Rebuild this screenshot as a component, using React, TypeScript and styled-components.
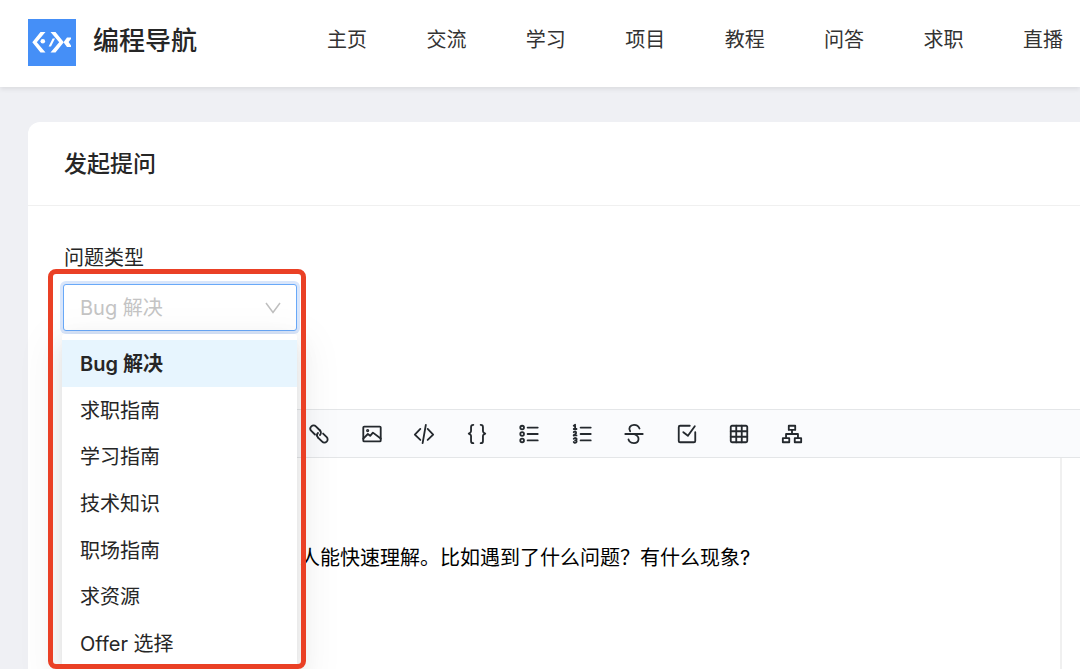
import React from "react";
import styled, { createGlobalStyle } from "styled-components";

const GlobalStyle = createGlobalStyle`
  *, *::before, *::after { box-sizing: border-box; }
  body {
    margin: 0;
    background: #eff0f4;
    color: #262626;
    font-family: Inter, "Noto Sans CJK SC", sans-serif;
    font-size: 20px;
    line-height: 32px;
  }
`;

const Page = styled.div`
  display: flex;
  flex-direction: column;
  min-height: 100vh;
`;

const Header = styled.header`
  position: relative;
  display: flex;
  align-items: center;
  height: 87px;
  padding: 0 17px 2px 28px;
  background: #fff;
  box-shadow: 0 2px 5px rgba(0, 0, 0, 0.09);
`;

const Brand = styled.a`
  display: flex;
  align-items: center;
  gap: 17px;
  flex: 0 0 299px;
  color: inherit;
  font-size: 26px;
  font-weight: 500;
  text-decoration: none;
`;

const LogoMark = styled.svg`
  display: block;
  width: 48px;
  height: 47px;
`;

const BrandName = styled.span`
  padding-bottom: 4px;
`;

const Nav = styled.nav`
  display: flex;
  flex: 1;
  justify-content: space-between;
  padding-bottom: 6px;
`;

const NavLink = styled.a`
  color: #333;
  text-decoration: none;
  white-space: nowrap;
`;

const Main = styled.main`
  display: flex;
  flex: 1;
  padding: 35px 0 0 28px;
`;

const Card = styled.section`
  display: flex;
  flex: 1;
  flex-direction: column;
  min-width: 0;
  background: #fff;
  border-radius: 12px 0 0 0;
`;

const CardHeader = styled.header`
  height: 84px;
  padding: 26px 36px 0;
  border-bottom: 1px solid #f0f0f0;
`;

const CardTitle = styled.h1`
  margin: 0;
  font-size: 23px;
  font-weight: 500;
  line-height: 32px;
`;

const Field = styled.div`
  position: relative;
  width: 269px;
  padding: 35px 0 0 35px;
`;

const FieldLabel = styled.label`
  display: block;
  height: 43px;
  padding: 1px 0 0 1px;
`;

const SelectBox = styled.div`
  position: relative;
  display: flex;
`;

const TypeSelect = styled.select`
  width: 100%;
  height: 47px;
  padding: 0 16px;
  appearance: none;
  background: #fff;
  border: 1px solid #69a9f8;
  border-radius: 3px;
  outline: none;
  box-shadow: 0 0 0 3px #d9e6fb;
  color: #c4c4c4;
  font: inherit;
`;

const Chevron = styled.svg`
  position: absolute;
  top: 16px;
  right: 16px;
  width: 16px;
  height: 16px;
  pointer-events: none;
`;

const Dropdown = styled.ul`
  position: absolute;
  z-index: 1;
  top: 128px;
  left: 34px;
  display: flex;
  flex-direction: column;
  width: 235px;
  height: 334px;
  margin: 0;
  padding: 6px 0 2px;
  list-style: none;
  background: #fff;
  border-radius: 3px;
  box-shadow:
    0 4px 9px -6px rgba(0, 0, 0, 0.12),
    0 9px 24px rgba(0, 0, 0, 0.08),
    0 14px 40px 12px rgba(0, 0, 0, 0.05);
`;

const Option = styled.li<{ $active?: boolean }>`
  display: flex;
  flex: 1;
  align-items: center;
  padding: 2px 18px 0;
  background: ${(p) => (p.$active ? "#e7f5fe" : "transparent")};
  font-weight: ${(p) => (p.$active ? 600 : 400)};
`;

const Highlight = styled.div`
  position: absolute;
  z-index: 2;
  top: 63px;
  left: 20px;
  width: 258px;
  height: 400px;
  border: 5px solid #ea4025;
  border-radius: 8px;
  pointer-events: none;
`;

const Editor = styled.section`
  display: flex;
  flex: 1;
  flex-direction: column;
  margin: 78px 0 0 35px;
`;

const Toolbar = styled.div`
  padding: 0 0 0 245px;
  background: #fafbfd;
  border: solid #e4e6e8;
  border-width: 1px 0;
`;

const ToolGroup = styled.div`
  display: flex;
  align-items: center;
  justify-content: space-between;
  width: 495px;
  height: 47px;
  padding-top: 1px;
`;

const ToolButton = styled.button`
  width: 22px;
  height: 22px;
  padding: 0;
  background: none;
  border: 0;
  color: #24292e;
`;

const ToolIcon = styled.svg`
  display: block;
  width: 22px;
  height: 22px;
  fill: none;
  stroke: currentColor;
  stroke-width: 4;
  stroke-linecap: round;
  stroke-linejoin: round;
`;

const Content = styled.div`
  flex: 1;
  margin-right: 18px;
  padding: 84px 0 0 237px;
  border-right: 2px solid #f0f0f0;
  color: #000;
`;

const Paragraph = styled.p`
  margin: 0;
  white-space: nowrap;
`;

const navItems = ["主页", "交流", "学习", "项目", "教程", "问答", "求职", "直播"];

const options = ["Bug 解决", "求职指南", "学习指南", "技术知识", "职场指南", "求资源", "Offer 选择"];

const tools: { label: string; paths: string[] }[] = [
  {
    label: "链接",
    paths: [
      "M26.24 16.373L17.1 7.233C14.439 4.572 10.065 4.63 7.332 7.364C4.598 10.098 4.539 14.471 7.2 17.133L15.136 25.068",
      "M32.903 23.003L40.838 30.939C43.499 33.6 43.441 37.974 40.707 40.707C37.973 43.441 33.6 43.5 30.939 40.838L21.799 31.698",
      "M26.109 26.142C28.843 23.408 28.902 19.034 26.24 16.373",
      "M21.799 21.798C19.065 24.532 19.007 28.906 21.668 31.567",
    ],
  },
  {
    label: "图片",
    paths: [
      "M5 10C5 8.9 5.9 8 7 8H41C42.1 8 43 8.9 43 10V38C43 39.1 42.1 40 41 40H7C5.9 40 5 39.1 5 38V10Z",
      "M14.5 18A1.5 1.5 0 1 0 14.5 15A1.5 1.5 0 1 0 14.5 18Z",
      "M5 34L15 24L20 28L26 21L43 34",
    ],
  },
  { label: "代码", paths: ["M16 13L4 25.432L16 37", "M32 13L44 25.432L32 37", "M28 4L21 44"] },
  {
    label: "代码块",
    paths: [
      "M16 4C14 4 11 5 11 9V18C11 21 6 23 6 23C6 23 11 25 11 28V39C11 43 14 44 16 44",
      "M32 4C34 4 37 5 37 9V18C37 21 42 23 42 23C42 23 37 25 37 28V39C37 43 34 44 32 44",
    ],
  },
  {
    label: "无序列表",
    paths: [
      "M9 14A4 4 0 1 0 9 6A4 4 0 1 0 9 14Z",
      "M9 28A4 4 0 1 0 9 20A4 4 0 1 0 9 28Z",
      "M9 42A4 4 0 1 0 9 34A4 4 0 1 0 9 42Z",
      "M21 24H43M21 38H43M21 10H43",
    ],
  },
  {
    label: "有序列表",
    paths: [
      "M9 4V13M12 13H6M12 27H6M9 4L6 6M11 38H9",
      "M6 20C6 20 9 17 11 20C13 23 6 27 6 27",
      "M6 34.5C6 34.5 8 31.5 11 33.5C14 35.5 11 38 11 38C11 38 14 40.5 11 42.5C8 44.5 6 41.5 6 41.5",
      "M21 24H43M21 38H43M21 10H43",
    ],
  },
  {
    label: "删除线",
    paths: [
      "M5 24H43",
      "M24 24C40 30 34 44 24 44C14 44 12 36 12 36",
      "M36 12C36 12 33 4 24 4C15 4 11.436 11.6 15.61 18",
    ],
  },
  {
    label: "任务列表",
    paths: [
      "M42 20V39C42 40.657 40.657 42 39 42H9C7.343 42 6 40.657 6 39V9C6 7.343 7.343 6 9 6H30",
      "M16 20L26 28L41 7",
    ],
  },
  {
    label: "表格",
    paths: [
      "M39.3 6H8.7C7.209 6 6 7.209 6 8.7V39.3C6 40.791 7.209 42 8.7 42H39.3C40.791 42 42 40.791 42 39.3V8.7C42 7.209 40.791 6 39.3 6Z",
      "M18 6V42M30 6V42M6 18H42M6 30H42",
    ],
  },
  {
    label: "图表",
    paths: ["M17 6H31V15H17Z", "M4 33H18V42H4Z", "M30 33H44V42H30Z", "M24 16V24", "M11 33V24H37V33"],
  },
];

export default function App() {
  return (
    <Page>
      <GlobalStyle />
      <Header>
        <Brand href="#">
          <LogoMark viewBox="0 0 48 47" aria-hidden="true">
            <rect width="48" height="47" fill="#458ff7" />
            <g fill="#fff">
              <path d="M12.5 13H17.5L8.8 23.2L17.5 33.5H12.5L4.3 23.2Z" />
              <path d="M22.5 13H27.5L35.8 23.2L27.5 33.5H22.5L31.2 23.2Z" />
              <circle cx="14.8" cy="22.2" r="2.3" />
              <path d="M24.6 19.5H27L23 27.5H20.6Z" />
              <path d="M39 18.5H43V20L40.6 23L43 26.5V28H39L35.5 23.2Z" />
            </g>
          </LogoMark>
          <BrandName>编程导航</BrandName>
        </Brand>
        <Nav>
          {navItems.map((item) => (
            <NavLink href="#" key={item}>
              {item}
            </NavLink>
          ))}
        </Nav>
      </Header>
      <Main>
        <Card>
          <CardHeader>
            <CardTitle>发起提问</CardTitle>
          </CardHeader>
          <Field>
            <FieldLabel htmlFor="question-type">问题类型</FieldLabel>
            <SelectBox>
              <TypeSelect id="question-type" defaultValue={options[0]}>
                {options.map((option) => (
                  <option key={option}>{option}</option>
                ))}
              </TypeSelect>
              <Chevron viewBox="0 0 16 16" aria-hidden="true">
                <path d="M1 3L8 12.5L15 3" fill="none" stroke="#bfbfbf" strokeWidth="1.5" />
              </Chevron>
            </SelectBox>
            <Dropdown>
              {options.map((option, index) => (
                <Option key={option} $active={index === 0}>
                  {option}
                </Option>
              ))}
            </Dropdown>
            <Highlight />
          </Field>
          <Editor>
            <Toolbar>
              <ToolGroup>
                {tools.map((tool) => (
                  <ToolButton key={tool.label} type="button" aria-label={tool.label}>
                    <ToolIcon viewBox="0 0 48 48">
                      {tool.paths.map((d) => (
                        <path key={d} d={d} />
                      ))}
                    </ToolIcon>
                  </ToolButton>
                ))}
              </ToolGroup>
            </Toolbar>
            <Content>
              <Paragraph>人能快速理解。比如遇到了什么问题？有什么现象?</Paragraph>
            </Content>
          </Editor>
        </Card>
      </Main>
    </Page>
  );
}
